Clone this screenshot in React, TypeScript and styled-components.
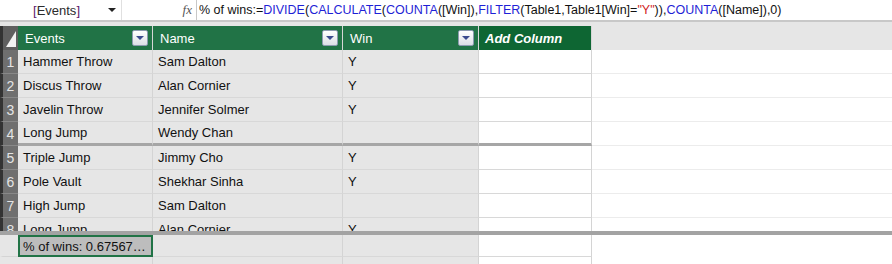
import styled, { createGlobalStyle } from 'styled-components'

const Global = createGlobalStyle`
  html, body { margin: 0; padding: 0; background: #ffffff; }
  body { font-family: 'Liberation Sans', Arial, sans-serif; font-size: 13px; }
`

const COLS = '18px 135px 190px 136px 113px 1fr'

const Window = styled.div`
  width: 892px;
  height: 264px;
  overflow: hidden;
  display: flex;
  flex-direction: column;
  background: #e6e6e6;
`

const FormulaBar = styled.div`
  height: 20px;
  display: flex;
  align-items: center;
  background: #ffffff;
  border-bottom: 2px solid #c8c8c8;
  flex-shrink: 0;
`

const NameBox = styled.div`
  width: 121px;
  height: 100%;
  display: flex;
  align-items: center;
  border-right: 1px solid #e0e0e0;
`

const NameText = styled.span`
  margin-left: 33px;
  color: #2b2b2b;
  font-size: 13px;
`

const Bracket = styled.span`
  color: #5b1a6e;
`

const Caret = styled.span`
  margin-left: auto;
  margin-right: 5px;
  width: 0;
  height: 0;
  border-left: 4px solid transparent;
  border-right: 4px solid transparent;
  border-top: 4px solid #222;
`

const FxBox = styled.div`
  width: 75px;
  height: 100%;
  display: flex;
  align-items: center;
  justify-content: flex-end;
  padding-right: 4px;
  box-sizing: border-box;
  border-right: 1px solid #c8c8c8;
  font-family: 'Liberation Serif', 'Times New Roman', serif;
  font-style: italic;
  color: #555;
  font-size: 13px;
`

const Formula = styled.div`
  padding-left: 2px;
  white-space: nowrap;
  font-size: 12.5px;
  color: #111;
`

const Tok = styled.span<{ $kind?: 'fn' | 'str' }>`
  color: ${p => (p.$kind === 'fn' ? '#1f1fd6' : p.$kind === 'str' ? '#d21f1f' : '#111')};
`

const Gap = styled.div`
  height: 4px;
  flex-shrink: 0;
  background: #e6e6e6;
`

const DataArea = styled.div`
  height: 205px;
  overflow: hidden;
  flex-shrink: 0;
  background: #ffffff;
`

const Row = styled.div`
  display: grid;
  grid-template-columns: ${COLS};
  height: 24px;
  box-sizing: border-box;
`

const Corner = styled.div`
  background: #5f5f5f;
  border-left: 3px solid #333;
  position: relative;
  &::after {
    content: '';
    position: absolute;
    right: 2px;
    bottom: 3px;
    width: 0;
    height: 0;
    border-left: 10px solid transparent;
    border-bottom: 16px solid #f2f2f2;
  }
`

const HeadCell = styled.div<{ $add?: boolean }>`
  background: ${p => (p.$add ? '#0e6633' : '#217346')};
  color: #ffffff;
  display: flex;
  align-items: center;
  padding-left: ${p => (p.$add ? '6px' : '7px')};
  padding-right: 4px;
  border-right: 1px solid #d6d6d6;
  font-weight: ${p => (p.$add ? 'bold' : 'normal')};
  font-style: ${p => (p.$add ? 'italic' : 'normal')};
  font-size: 13px;
`

const HeadLabel = styled.span`
  flex: 1;
`

const FilterBtn = styled.div`
  width: 14px;
  height: 14px;
  border: 1px solid #8d9bb0;
  border-radius: 2px;
  background: linear-gradient(#ffffff, #dcdfe6);
  display: flex;
  align-items: center;
  justify-content: center;
  &::after {
    content: '';
    width: 0;
    height: 0;
    border-left: 4px solid transparent;
    border-right: 4px solid transparent;
    border-top: 4px solid #3b4a8e;
  }
`

const HeadFill = styled.div`
  background: #e6e6e6;
`

const RowNum = styled.div<{ $light?: boolean }>`
  background: ${p => (p.$light ? '#e6e6e6' : '#6f6f6f')};
  border-left: 3px solid ${p => (p.$light ? '#e6e6e6' : '#333')};
  color: #e4e4e4;
  font-size: 14px;
  display: flex;
  align-items: center;
  justify-content: center;
  border-bottom: 1px solid ${p => (p.$light ? '#d4d4d4' : '#888')};
`

const Cell = styled.div<{ $white?: boolean; $thick?: boolean }>`
  background: ${p => (p.$white ? '#ffffff' : '#e6e6e6')};
  border-right: 1px solid #d4d4d4;
  border-bottom: ${p => (p.$thick ? '3px solid #a6a6a6' : '1px solid #d8d8d8')};
  display: flex;
  align-items: center;
  padding-left: 5px;
  color: #111;
  white-space: nowrap;
  overflow: hidden;
`

const Spacer = styled.div<{ $lines?: boolean }>`
  background: #ffffff;
  border-bottom: 1px solid ${p => (p.$lines ? '#ececec' : 'transparent')};
`

const Splitter = styled.div`
  height: 4px;
  background: #a3a3a3;
  flex-shrink: 0;
`

const CalcArea = styled.div`
  flex: 1;
  background: #ffffff;
`

const CalcRow = styled.div`
  display: grid;
  grid-template-columns: ${COLS};
  height: 22px;
`

const Measure = styled.div`
  background: #bdbdbd;
  border: 2px solid #217346;
  display: flex;
  align-items: center;
  padding-left: 3px;
  color: #111;
  white-space: nowrap;
`

const rows: [string, string, string][] = [
  ['Hammer Throw', 'Sam Dalton', 'Y'],
  ['Discus Throw', 'Alan Cornier', 'Y'],
  ['Javelin Throw', 'Jennifer Solmer', 'Y'],
  ['Long Jump', 'Wendy Chan', ''],
  ['Triple Jump', 'Jimmy Cho', 'Y'],
  ['Pole Vault', 'Shekhar Sinha', 'Y'],
  ['High Jump', 'Sam Dalton', ''],
  ['Long Jump', 'Alan Cornier', 'Y'],
]

const formula: [string, ('fn' | 'str')?][] = [
  ['% of wins:='],
  ['DIVIDE', 'fn'],
  ['('],
  ['CALCULATE', 'fn'],
  ['('],
  ['COUNTA', 'fn'],
  ['([Win]),'],
  ['FILTER', 'fn'],
  ['(Table1,Table1[Win]='],
  ['"Y"', 'str'],
  [')),'],
  ['COUNTA', 'fn'],
  ['([Name]),0)'],
]

export default function App() {
  return (
    <Window>
      <Global />
      <FormulaBar>
        <NameBox>
          <NameText>
            <Bracket>[</Bracket>Events<Bracket>]</Bracket>
          </NameText>
          <Caret />
        </NameBox>
        <FxBox>fx</FxBox>
        <Formula>
          {formula.map(([t, k], i) => (
            <Tok key={i} $kind={k}>{t}</Tok>
          ))}
        </Formula>
      </FormulaBar>
      <Gap />
      <DataArea>
        <Row>
          <Corner />
          <HeadCell>
            <HeadLabel>Events</HeadLabel>
            <FilterBtn />
          </HeadCell>
          <HeadCell>
            <HeadLabel>Name</HeadLabel>
            <FilterBtn />
          </HeadCell>
          <HeadCell>
            <HeadLabel>Win</HeadLabel>
            <FilterBtn />
          </HeadCell>
          <HeadCell $add>Add Column</HeadCell>
          <HeadFill />
        </Row>
        {rows.map(([ev, name, win], i) => (
          <Row key={i}>
            <RowNum>{i + 1}</RowNum>
            <Cell $thick={i === 3}>{ev}</Cell>
            <Cell $thick={i === 3}>{name}</Cell>
            <Cell $thick={i === 3}>{win}</Cell>
            <Cell $white $thick={i === 3} />
            <Spacer $lines />
          </Row>
        ))}
      </DataArea>
      <Splitter />
      <CalcArea>
        <CalcRow>
          <RowNum $light />
          <Measure>% of wins: 0.67567…</Measure>
          <Cell />
          <Cell />
          <Cell $white />
          <Spacer />
        </CalcRow>
        <CalcRow>
          <RowNum $light />
          <Cell />
          <Cell />
          <Cell />
          <Cell $white />
          <Spacer />
        </CalcRow>
      </CalcArea>
    </Window>
  )
}
